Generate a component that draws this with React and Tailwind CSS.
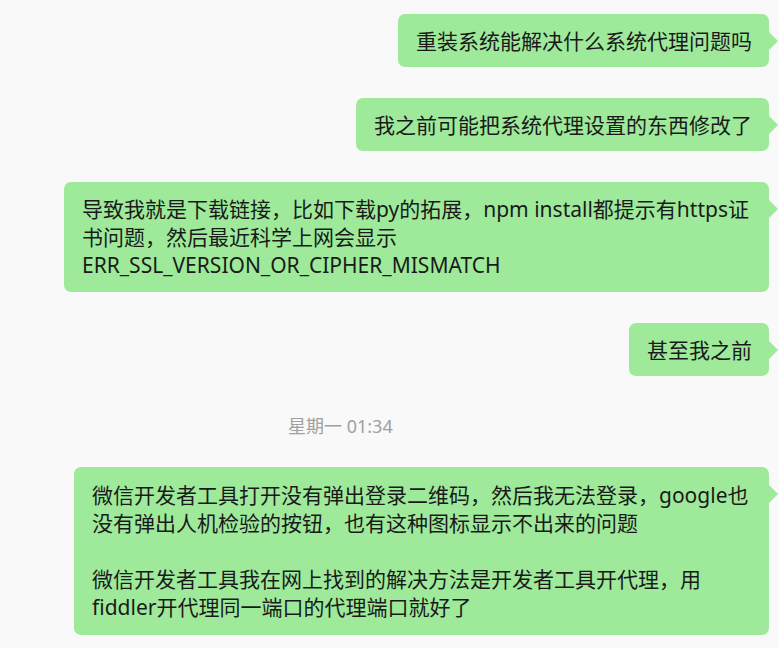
const FONT = "font-['Noto_Sans','Noto_Sans_CJK_SC',sans-serif]";

function Bubble({ children, className = '' }) {
  return (
    <div className={`relative rounded-[7px] bg-[#9eea9a] pl-[18px] pr-[17px] text-[21px] leading-[28px] text-[#1a1a1a] ${className}`}>
      {children}
      {/* tail */}
      <span className="absolute right-[-9px] top-[18px] h-0 w-0 border-y-[9px] border-l-[9px] border-y-transparent border-l-[#9eea9a]" />
    </div>
  );
}

export default function App() {
  return (
    <div className={`h-[648px] w-[779px] overflow-hidden bg-[#f9f9f9] ${FONT}`}>
      <div className="flex flex-col items-end pr-[10px] pt-[14px]">
        <Bubble className="pb-[12px] pt-[13px]">重装系统能解决什么系统代理问题吗</Bubble>
        <Bubble className="mt-[31px] pb-[12px] pt-[13px]">我之前可能把系统代理设置的东西修改了</Bubble>
        <Bubble className="mt-[31px] w-[705px] pb-[13px] pt-[13px]">
          导致我就是下载链接，比如下载py的拓展，npm install都提示有https证<br />
          书问题，然后最近科学上网会显示<br />
          ERR_SSL_VERSION_OR_CIPHER_MISMATCH
        </Bubble>
        <Bubble className="mt-[31px] pb-[12px] pt-[13px]">甚至我之前</Bubble>
      </div>

      <div className="mt-[38px] pl-[288px] text-[18px] leading-[24px] text-[#a0a0a0]">星期一 01:34</div>

      <div className="mt-[29px] flex flex-col items-end pr-[10px]">
        <Bubble className="w-[695px] pb-[14px] pt-[14px]">
          微信开发者工具打开没有弹出登录二维码，然后我无法登录，google也<br />
          没有弹出人机检验的按钮，也有这种图标显示不出来的问题<br />
          <br />
          微信开发者工具我在网上找到的解决方法是开发者工具开代理，用<br />
          fiddler开代理同一端口的代理端口就好了
        </Bubble>
      </div>
    </div>
  );
}
